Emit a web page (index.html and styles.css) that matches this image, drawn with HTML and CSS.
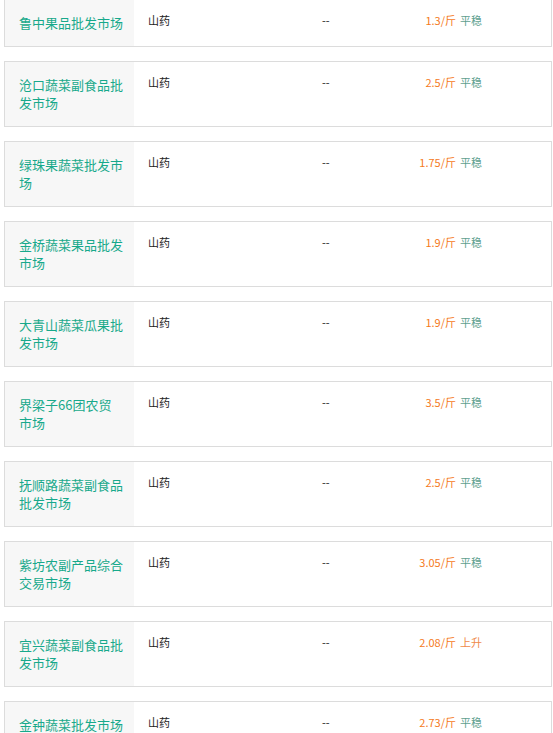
FILE: index.html
```html
<!DOCTYPE html>
<html lang="zh">
<head>
<meta charset="utf-8">
<link rel="stylesheet" href="styles.css">
</head>
<body>
<div class="list">
  <div class="card"><div class="name">鲁中果品批发市场</div><div class="prod">山药</div><div class="dash">--</div><div class="price">1.3/斤</div><div class="trend">平稳</div></div>
  <div class="card"><div class="name">沧口蔬菜副食品批发市场</div><div class="prod">山药</div><div class="dash">--</div><div class="price">2.5/斤</div><div class="trend">平稳</div></div>
  <div class="card"><div class="name">绿珠果蔬菜批发市场</div><div class="prod">山药</div><div class="dash">--</div><div class="price">1.75/斤</div><div class="trend">平稳</div></div>
  <div class="card"><div class="name">金桥蔬菜果品批发市场</div><div class="prod">山药</div><div class="dash">--</div><div class="price">1.9/斤</div><div class="trend">平稳</div></div>
  <div class="card"><div class="name">大青山蔬菜瓜果批发市场</div><div class="prod">山药</div><div class="dash">--</div><div class="price">1.9/斤</div><div class="trend">平稳</div></div>
  <div class="card"><div class="name">界梁子66团农贸市场</div><div class="prod">山药</div><div class="dash">--</div><div class="price">3.5/斤</div><div class="trend">平稳</div></div>
  <div class="card"><div class="name">抚顺路蔬菜副食品批发市场</div><div class="prod">山药</div><div class="dash">--</div><div class="price">2.5/斤</div><div class="trend">平稳</div></div>
  <div class="card"><div class="name">紫坊农副产品综合交易市场</div><div class="prod">山药</div><div class="dash">--</div><div class="price">3.05/斤</div><div class="trend">平稳</div></div>
  <div class="card"><div class="name">宜兴蔬菜副食品批发市场</div><div class="prod">山药</div><div class="dash">--</div><div class="price">2.08/斤</div><div class="trend up">上升</div></div>
  <div class="card"><div class="name">金钟蔬菜批发市场</div><div class="prod">山药</div><div class="dash">--</div><div class="price">2.73/斤</div><div class="trend">平稳</div></div>
</div>
</body>
</html>
```
FILE: styles.css
```css
html, body {
  margin: 0;
  padding: 0;
  background: #fff;
  overflow: hidden;
}
body {
  font-family: "Noto Sans CJK SC", "Noto Sans", sans-serif;
}
.list {
  margin-top: -1px;
  padding-left: 4px;
  width: 548px;
}
.card {
  display: flex;
  align-items: stretch;
  border: 1px solid #dcdcdc;
  margin-bottom: 14px;
  background: #fff;
}
.name {
  box-sizing: border-box;
  width: 129px;
  flex: none;
  background: #f7f7f7;
  padding: 14px 10px 14px 14px;
  font-size: 13px;
  line-height: 18px;
  color: #17a98b;
  word-break: break-all;
}
.prod, .dash, .price, .trend {
  padding-top: 12px;
  font-size: 11px;
  line-height: 16px;
  flex: none;
}
.prod {
  box-sizing: border-box;
  width: 188px;
  padding-left: 14px;
  color: #222;
}
.dash {
  width: 60px;
  color: #222;
}
.price {
  width: 74px;
  text-align: right;
  color: #f57a1c;
}
.trend {
  padding-left: 4px;
  color: #5e9f90;
}
.trend.up {
  color: #ef8a4a;
}
```
